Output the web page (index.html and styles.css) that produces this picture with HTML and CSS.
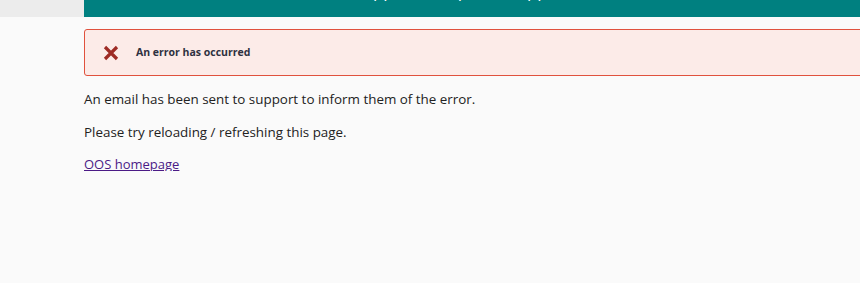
FILE: index.html
```html
<!DOCTYPE html>
<html>
<head>
    <meta charset="UTF-8">
    <title>Error</title>
    <link rel="stylesheet" href="styles.css">
</head>
<body>
<div class="top">
    <div class="side"></div>
    <div class="bar">
        <h1 class="title">OOS Support - Help and Support</h1>
    </div>
</div>
<div class="main">
    <div class="alert">
        <svg class="icon" width="16" height="16" viewBox="0 0 16 16">
            <path d="M2 2 L14 14 M14 2 L2 14" stroke="#9e2b25" stroke-width="3.2" fill="none"/>
        </svg>
        <strong>An error has occurred</strong>
    </div>
    <p>An email has been sent to support to inform them of the error.</p>
    <p>Please try reloading / refreshing this page.</p>
    <p class="home"><a href="#">OOS homepage</a></p>
</div>
</body>
</html>
```

FILE: styles.css
```css
*{margin:0;padding:0;}
html,body{overflow:hidden;}
body{font:13.4px/1.2 "Open Sans","Noto Sans",sans-serif;background:#fafafa;color:#222;}
.top{display:flex;height:17px;overflow:hidden;}
.side{width:84px;background:#ececec;}
.bar{flex:1;background:#008080;overflow:hidden;}
.title{margin-top:-21px;padding-right:60px;text-align:center;font-size:17px;line-height:23px;font-weight:normal;color:#fff;}
.main{margin:12px 0 0 84px;width:900px;}
.alert{display:flex;align-items:center;height:45px;border:1px solid #e0513d;border-radius:3px;background:#fcebe8;}
.icon{margin:0 0 0 18px;}
.alert strong{margin-left:17px;font-size:10.5px;color:#2e3140;}
p{margin-top:17.5px;height:15px;}
.alert + p{margin-top:15px;}
.home{font-size:13px;line-height:16px;}
a{color:#4b1a86;text-decoration:underline;}
```
